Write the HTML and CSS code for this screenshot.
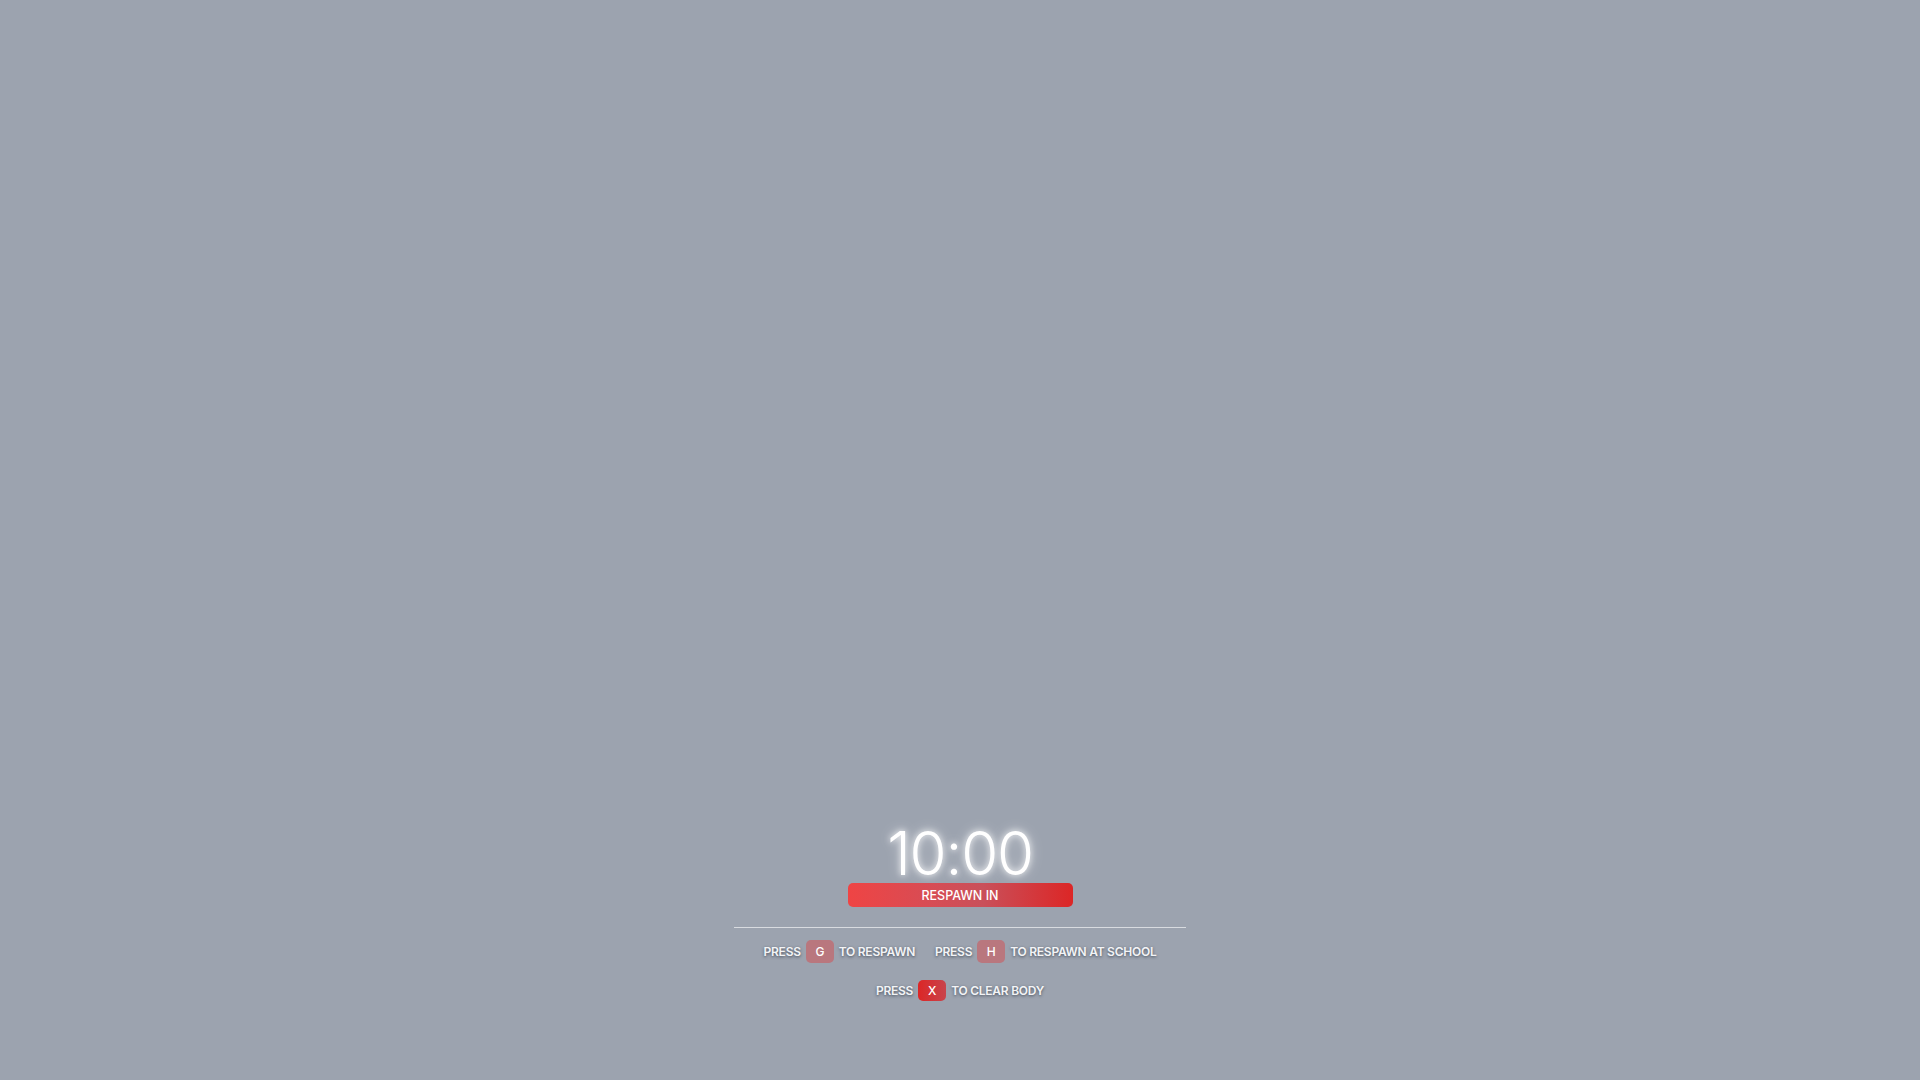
FILE: index.html
```html
<!DOCTYPE html>
<html lang="en">
<head>
<meta charset="utf-8">
<title>Respawn</title>
<link rel="stylesheet" href="styles.css">
</head>
<body>
<main class="screen">
  <section class="death">
    <div class="timer">10:00</div>
    <div class="respawn-bar">RESPAWN IN</div>
    <div class="divider"></div>
    <div class="row">
      <span class="hint">PRESS <span class="key key-soft">G</span> TO RESPAWN</span>
      <span class="hint">PRESS <span class="key key-soft">H</span> TO RESPAWN AT SCHOOL</span>
    </div>
    <div class="row row-second">
      <span class="hint">PRESS <span class="key key-solid">X</span> TO CLEAR BODY</span>
    </div>
  </section>
</main>
</body>
</html>
```

FILE: styles.css
```css
* { box-sizing: border-box; }
html, body { margin: 0; padding: 0; height: 100%; }
body {
  background: #9ca3af;
  font-family: "Inter", "Open Sans", sans-serif;
  color: #fff;
}
.screen {
  height: 1080px;
  display: flex;
  flex-direction: column;
  justify-content: flex-end;
  align-items: center;
  padding-bottom: 79px;
}
.death {
  display: flex;
  flex-direction: column;
  align-items: center;
}
.timer {
  font-size: 60px;
  font-weight: 300;
  line-height: 60px;
  letter-spacing: -1.2px;
  color: #fff;
  text-shadow: 0 0 6px rgba(255,255,255,0.9), 0 0 14px rgba(255,255,255,0.6);
}
.respawn-bar {
  margin-top: 0;
  width: 225px;
  height: 24px;
  border-radius: 5px;
  background: linear-gradient(90deg, #ef4444 0%, #d84c54 35%, #c9505a 60%, #dc2626 100%);
  font-size: 12.5px;
  font-weight: 500;
  display: flex;
  align-items: center;
  justify-content: center;
  color: #fff;
}
.divider {
  margin-top: 20px;
  width: 452px;
  height: 1px;
  background: #d8dbe0;
}
.row {
  margin-top: 12px;
  display: flex;
  gap: 20px;
  justify-content: center;
}
.row-second { margin-top: 17px; }
.hint {
  display: inline-flex;
  align-items: center;
  gap: 5px;
  font-size: 12px;
  font-weight: 600;
  letter-spacing: -0.25px;
  color: #f3f4f6;
  text-shadow: 0 1px 3px rgba(31,41,55,0.7);
}
.key {
  display: inline-flex;
  align-items: center;
  justify-content: center;
  width: 28px;
  height: 23px;
  border-radius: 5px;
  font-size: 12px;
  font-weight: 500;
  color: #fff;
  text-shadow: none;
}
.key-soft { background: #b9777e; }
.key-solid { background: linear-gradient(90deg, #dc2626, #c8444c); height: 21px; }
```
